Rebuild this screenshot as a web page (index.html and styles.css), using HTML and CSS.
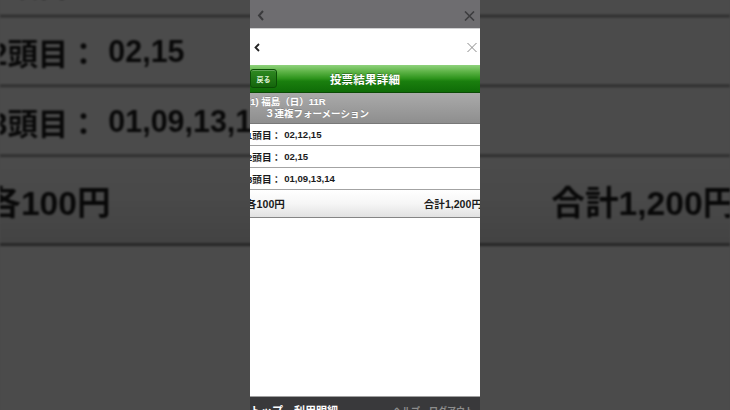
FILE: index.html
```html
<!DOCTYPE html>
<html lang="ja">
<head>
<meta charset="utf-8">
<title>投票結果詳細</title>
<link rel="stylesheet" href="styles.css">
</head>
<body>
<div class="stage">
  <div class="backdrop" aria-hidden="true">
    <div class="screen">
      <div class="dimbar">
        <svg class="ic-chev-dim" width="8" height="11" viewBox="0 0 8 11"><path d="M6 1 L2 5.5 L6 10" fill="none" stroke="#3b3b3d" stroke-width="2"/></svg>
        <svg class="ic-x-dim" width="11" height="10" viewBox="0 0 11 10"><path d="M1 0.5 L10 9.5 M10 0.5 L1 9.5" fill="none" stroke="#3d3d3f" stroke-width="1.6"/></svg>
      </div>
      <div class="navbar">
        <svg class="ic-chev" width="6" height="9" viewBox="0 0 6 9"><path d="M5 1 L1.5 4.5 L5 8" fill="none" stroke="#222" stroke-width="1.8"/></svg>
        <svg class="ic-x" width="10" height="11" viewBox="0 0 10 11"><path d="M0.5 1 L9.5 10 M9.5 1 L0.5 10" fill="none" stroke="#8a8a8a" stroke-width="1"/></svg>
      </div>
      <div class="page">
        <div class="titlebar">
          <div class="tb-left"><span class="backbtn">戻る</span></div>
          <h1 class="title">投票結果詳細</h1>
          <div class="tb-right"></div>
        </div>
        <div class="infobar">
          <span class="info-line">(1) 福島（日）11R</span>
          <span class="info-line indent">３連複フォーメーション</span>
        </div>
        <div class="row"><span class="label">1頭目：</span><span class="value">02,12,15</span></div>
        <div class="row"><span class="label">2頭目：</span><span class="value">02,15</span></div>
        <div class="row"><span class="label">3頭目：</span><span class="value">01,09,13,14</span></div>
        <div class="summary"><span>各100円</span><span>合計1,200円</span></div>
        <div class="filler"></div>
      </div>
      <div class="tabbar"><span>トップ　利用明細</span><span class="tab-right">ヘルプ　ログアウト</span></div>
    </div>
  </div>

  <div class="screen main">
    <div class="dimbar">
      <svg class="ic-chev-dim" width="8" height="11" viewBox="0 0 8 11"><path d="M6 1 L2 5.5 L6 10" fill="none" stroke="#3b3b3d" stroke-width="2"/></svg>
      <svg class="ic-x-dim" width="11" height="10" viewBox="0 0 11 10"><path d="M1 0.5 L10 9.5 M10 0.5 L1 9.5" fill="none" stroke="#3d3d3f" stroke-width="1.6"/></svg>
    </div>
    <div class="navbar">
      <svg class="ic-chev" width="6" height="9" viewBox="0 0 6 9"><path d="M5 1 L1.5 4.5 L5 8" fill="none" stroke="#222" stroke-width="1.8"/></svg>
      <svg class="ic-x" width="10" height="11" viewBox="0 0 10 11"><path d="M0.5 1 L9.5 10 M9.5 1 L0.5 10" fill="none" stroke="#8a8a8a" stroke-width="1"/></svg>
    </div>
    <div class="page">
      <div class="titlebar">
        <div class="tb-left"><span class="backbtn">戻る</span></div>
        <h1 class="title">投票結果詳細</h1>
        <div class="tb-right"></div>
      </div>
      <div class="infobar">
        <span class="info-line">(1) 福島（日）11R</span>
        <span class="info-line indent">３連複フォーメーション</span>
      </div>
      <div class="row"><span class="label">1頭目：</span><span class="value">02,12,15</span></div>
      <div class="row"><span class="label">2頭目：</span><span class="value">02,15</span></div>
      <div class="row"><span class="label">3頭目：</span><span class="value">01,09,13,14</span></div>
      <div class="summary"><span>各100円</span><span>合計1,200円</span></div>
      <div class="filler"></div>
    </div>
    <div class="tabbar"><span>トップ　利用明細</span><span class="tab-right">ヘルプ　ログアウト</span></div>
  </div>
</div>
</body>
</html>
```

FILE: styles.css
```css
* { box-sizing: border-box; margin: 0; padding: 0; }

html, body {
  width: 730px;
  height: 410px;
  overflow: hidden;
  background: #4b4b4b;
}

body {
  font-family: "Liberation Sans", "Noto Sans CJK JP", sans-serif;
}

.stage {
  position: relative;
  width: 730px;
  height: 410px;
  overflow: hidden;
  display: flex;
  justify-content: center;
  background: #4b4b4b;
}

.backdrop {
  position: absolute;
  inset: 0;
  display: flex;
  justify-content: center;
  filter: brightness(0.295) blur(1px);
}

.backdrop .screen {
  transform: scale(3.174);
  transform-origin: 50% 50%;
}

.screen {
  width: 230px;
  height: 410px;
  overflow: hidden;
  display: flex;
  flex-direction: column;
  background: #fff;
}

.main {
  position: relative;
}

/* dimmed previous page bar */
.dimbar {
  height: 29px;
  flex: none;
  background: #6e6d70;
  border-bottom: 1px solid #cfcfd1;
  display: flex;
  justify-content: space-between;
  align-items: center;
  padding: 0 4px 0 7px;
}
.ic-chev-dim { display: block; margin-top: 3px; }
.ic-x-dim { display: block; margin-top: 3px; margin-right: 1px; }

/* white sheet nav */
.navbar {
  height: 36px;
  flex: none;
  background: #fff;
  display: flex;
  justify-content: space-between;
  align-items: center;
  padding: 0 3px 0 4px;
}
.ic-chev { display: block; margin-top: 1px; }
.ic-x { display: block; margin-top: 1px; }

.page {
  flex: 1;
  display: flex;
  flex-direction: column;
  margin: 0 -4px 0 -4px;
  min-height: 0;
}

/* green title bar */
.titlebar {
  height: 28px;
  flex: none;
  display: grid;
  grid-template-columns: 1fr auto 1fr;
  align-items: center;
  background: linear-gradient(#8fd27c 0%, #5db346 25%, #2e941c 50%, #1a7f0e 60%, #0f6c07 100%);
  border-bottom: 1px solid #0b4a06;
}
.tb-left { padding-left: 4px; display: flex; }
.backbtn {
  display: flex;
  align-items: center;
  justify-content: center;
  width: 27px;
  height: 19px;
  border-radius: 3px;
  background: linear-gradient(#2f8a22, #14650b);
  border: 1px solid #0b4e06;
  box-shadow: inset 0 1px 0 rgba(255,255,255,0.25);
  color: #dff3d8;
  font-size: 7px;
  font-weight: bold;
}
.title {
  color: #fff;
  font-size: 11.5px;
  font-weight: bold;
  letter-spacing: 0.2px;
  text-shadow: 0 -1px 0 rgba(0,0,0,0.3);
}

/* race info bar */
.infobar {
  height: 31px;
  flex: none;
  background: linear-gradient(#aaaaaa, #8e8e8e);
  border-bottom: 1px solid #787878;
  color: #fff;
  font-size: 9.5px;
  font-weight: bold;
  line-height: 12px;
  padding: 3px 0 0 1px;
  display: flex;
  flex-direction: column;
  text-shadow: 0 -1px 0 rgba(0,0,0,0.15);
}
.info-line { display: block; white-space: nowrap; }
.indent { padding-left: 18px; }

/* bet rows */
.row {
  height: 22px;
  flex: none;
  background: #fff;
  border-bottom: 1px solid #a3a3a3;
  display: flex;
  align-items: center;
  padding-left: 1px;
  font-size: 9.6px;
  font-weight: bold;
  color: #1b1b1b;
  white-space: nowrap;
}
.value { margin-left: 3px; }

.summary {
  height: 28px;
  flex: none;
  background: linear-gradient(#ffffff 0%, #f6f6f6 50%, #e2e2e2 100%);
  border-bottom: 1px solid #858585;
  box-shadow: 0 1px 1px rgba(0,0,0,0.12);
  display: flex;
  justify-content: space-between;
  align-items: center;
  padding: 0 2px 0 0;
  font-size: 10.6px;
  font-weight: bold;
  color: #1b1b1b;
  white-space: nowrap;
}

.filler {
  flex: 1;
  background: #fff;
}

/* bottom tab bar */
.tabbar {
  height: 14px;
  flex: none;
  background: #39393b;
  border-top: 1px solid #a0a0a0;
  display: flex;
  justify-content: space-between;
  padding: 8px 6px 0 0;
  color: #fff;
  font-size: 11px;
  font-weight: bold;
  line-height: 13px;
  white-space: nowrap;
  overflow: hidden;
}
.tab-right { color: #8c8c8c; font-size: 9px; }
```
